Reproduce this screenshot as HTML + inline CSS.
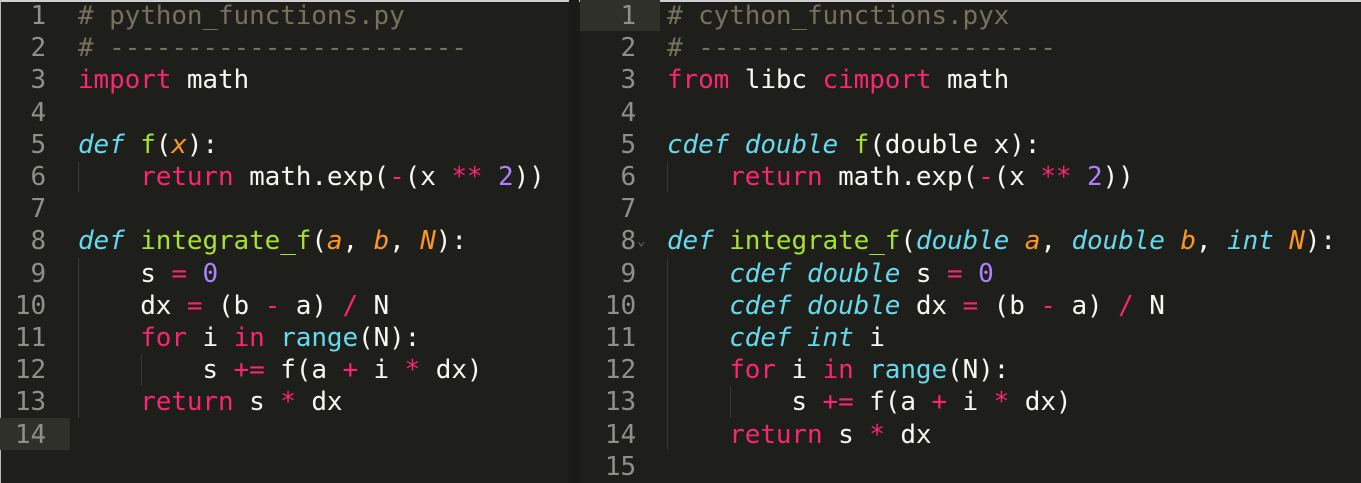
<!DOCTYPE html>
<html><head><style>
html,body{margin:0;padding:0;}
body{width:1361px;height:483px;background:#1e1f1b;position:relative;overflow:hidden;font-family:"DejaVu Sans Mono","Liberation Mono",monospace;font-size:26px;letter-spacing:-0.1px;}
.top{position:absolute;left:0;top:0;width:1361px;height:2px;background:#cfcfcf;}
.lft{position:absolute;left:0;top:0;width:1px;height:483px;background:#bbb;}
.div{position:absolute;left:569px;top:0;width:10px;height:483px;background:#1a1b17;}
.row{position:absolute;height:32px;line-height:32px;white-space:pre;color:#f8f8f2;}
.n{position:absolute;height:32px;line-height:32px;text-align:right;color:#8f908a;width:40px;}
.c{color:#75715e}.k{color:#f92672}.g{color:#a6e22e}.b{color:#66d9ef;font-style:italic}.o{color:#fd971f;font-style:italic}.p{color:#ae81ff}.bn{color:#66d9ef}
.hl{position:absolute;background:#2f302a;}
.guide{position:absolute;width:1px;background:#3a3b35;}
</style></head><body>
<div class="top"></div><div class="lft"></div><div class="div"></div>
<div class="hl" style="left:0;top:418px;width:70px;height:32px"></div>
<div class="hl" style="left:580px;top:0;width:80px;height:31px"></div>
<div class="guide" style="left:78px;top:162px;height:30px"></div>
<div class="guide" style="left:78px;top:258px;height:160px"></div>
<div class="guide" style="left:141px;top:354px;height:32px"></div>
<div class="guide" style="left:667px;top:162px;height:30px"></div>
<div class="guide" style="left:667px;top:258px;height:192px"></div>
<div class="guide" style="left:730px;top:386px;height:32px"></div>

<div id="L"></div>
<script>
function pane(x0,nx,lines){
 let h='';
 lines.forEach((l,i)=>{
  const y=i*32.2;
  h+=`<div class="n" style="left:${nx-40}px;top:${y}px">${i+1}</div>`;
  h+=`<div class="row" style="left:${x0}px;top:${y}px">${l}</div>`;
 });
 return h;
}
const L=[
'<span class="c"># python_functions.py</span>',
'<span class="c"># -----------------------</span>',
'<span class="k">import</span> math',
'',
'<span class="b">def</span> <span class="g">f</span>(<span class="o">x</span>):',
'    <span class="k">return</span> math.exp(<span class="k">-</span>(x <span class="k">**</span> <span class="p">2</span>))',
'',
'<span class="b">def</span> <span class="g">integrate_f</span>(<span class="o">a</span>, <span class="o">b</span>, <span class="o">N</span>):',
'    s <span class="k">=</span> <span class="p">0</span>',
'    dx <span class="k">=</span> (b <span class="k">-</span> a) <span class="k">/</span> N',
'    <span class="k">for</span> i <span class="k">in</span> <span class="bn">range</span>(N):',
'        s <span class="k">+=</span> f(a <span class="k">+</span> i <span class="k">*</span> dx)',
'    <span class="k">return</span> s <span class="k">*</span> dx',
''];
const R=[
'<span class="c"># cython_functions.pyx</span>',
'<span class="c"># -----------------------</span>',
'<span class="k">from</span> libc <span class="k">cimport</span> math',
'',
'<span class="b">cdef</span> <span class="b">double</span> <span class="g">f</span>(double x):',
'    <span class="k">return</span> math.exp(<span class="k">-</span>(x <span class="k">**</span> <span class="p">2</span>))',
'',
'<span class="b">def</span> <span class="g">integrate_f</span>(<span class="b">double</span> <span class="o">a</span>, <span class="b">double</span> <span class="o">b</span>, <span class="b">int</span> <span class="o">N</span>):',
'    <span class="b">cdef</span> <span class="b">double</span> s <span class="k">=</span> <span class="p">0</span>',
'    <span class="b">cdef</span> <span class="b">double</span> dx <span class="k">=</span> (b <span class="k">-</span> a) <span class="k">/</span> N',
'    <span class="b">cdef</span> <span class="b">int</span> i',
'    <span class="k">for</span> i <span class="k">in</span> <span class="bn">range</span>(N):',
'        s <span class="k">+=</span> f(a <span class="k">+</span> i <span class="k">*</span> dx)',
'    <span class="k">return</span> s <span class="k">*</span> dx',
''];
document.getElementById('L').innerHTML=pane(78,46,L)+pane(667,636,R)+
'<div class="row" style="left:637px;top:225px;color:#6a6b65;font-size:14px">&#8964;</div>';
</script>
</body></html>
